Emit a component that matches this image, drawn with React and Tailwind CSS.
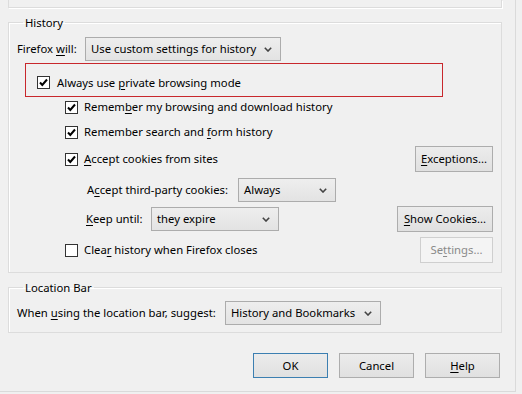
const font = { fontFamily: '"Noto Sans", "Open Sans", sans-serif' }

function U({ children }) {
  return <span className="underline underline-offset-2">{children}</span>
}

function Check({ checked }) {
  return (
    <span className="w-[13px] h-[13px] border border-[#333] bg-white flex items-center justify-center shrink-0">
      {checked && (
        <svg width="11" height="11" viewBox="0 0 11 11">
          <path d="M2 5.5 L4.3 8 L9 2.5" fill="none" stroke="#000" strokeWidth="2" />
        </svg>
      )}
    </span>
  )
}

function Select({ width, children }) {
  return (
    <div className={`${width} h-[24px] border border-[#acacac] bg-gradient-to-b from-[#eeeeee] to-[#e3e3e3] flex items-center justify-between pl-[5px] pr-[8px]`}>
      <span>{children}</span>
      <svg width="8" height="5" viewBox="0 0 8 5">
        <path d="M0.8 0.8 L4 4 L7.2 0.8" fill="none" stroke="#444" strokeWidth="1.6" />
      </svg>
    </div>
  )
}

function Btn({ children, width = 'w-[75px]', h = 'h-[26px]', disabled, def }) {
  const border = def ? 'border-[#3c7fb1]' : disabled ? 'border-[#cfcfcf]' : 'border-[#adadad]'
  const bg = disabled ? 'bg-[#f4f4f4] text-[#8a8a8a]' : 'bg-gradient-to-b from-[#ececec] to-[#e0e0e0] text-black'
  return <div className={`${width} ${h} border ${border} ${bg} flex items-center justify-center shrink-0`}>{children}</div>
}

function Row({ className, children }) {
  return <div className={`flex items-center ${className}`}>{children}</div>
}

export default function App() {
  return (
    <div className="w-[522px] h-[394px] bg-[#f0f0f0] overflow-hidden text-[11.3px] text-black leading-none" style={font}>
      <div className="w-[516px] h-[392px] border-r border-b border-[#dadada] flex flex-col">
        <div className="ml-[8px] w-[494px] h-[8px] border-x border-b border-[#dcdcdc] shadow-[1px_1px_0_#ffffff]" />

        <fieldset className="ml-[8px] mt-[6px] w-[494px] border border-[#dcdcdc] px-[8px] pb-[9px] shadow-[inset_1px_1px_0_#ffffff]">
          <legend className="ml-[6px] px-[2px] h-[16px] leading-[18px]">History</legend>

          <Row className="mt-[7px] h-[24px]">
            <span className="w-[68px]">Firefox <U>w</U>ill:</span>
            <Select width="w-[196px]">Use custom settings for history</Select>
          </Row>

          <div className="mt-[2px] ml-[8px] w-[418px] h-[34px] border border-[#c8272c] flex items-center pl-[11px] pt-[5px]">
            <Check checked />
            <span className="ml-[7px]">Always use <U>p</U>rivate browsing mode</span>
          </div>

          <Row className="mt-[2px] h-[16px] pl-[48px]">
            <Check checked />
            <span className="ml-[6px]">Remem<U>b</U>er my browsing and download history</span>
          </Row>

          <Row className="mt-[9px] h-[16px] pl-[48px]">
            <Check checked />
            <span className="ml-[6px]">Remember search and <U>f</U>orm history</span>
          </Row>

          <Row className="mt-[6px] h-[26px] pl-[48px] justify-between">
            <div className="flex items-center">
              <Check checked />
              <span className="ml-[6px]"><U>A</U>ccept cookies from sites</span>
            </div>
            <Btn width="w-[78px]"><U>E</U>xceptions...</Btn>
          </Row>

          <Row className="mt-[6px] h-[24px] pl-[70px]">
            <span className="w-[151px]">A<U>c</U>cept third-party cookies:</span>
            <Select width="w-[98px]">Always</Select>
          </Row>

          <Row className="mt-[4px] h-[26px] pl-[69px] justify-between">
            <div className="flex items-center">
              <span className="w-[65px]"><U>K</U>eep until:</span>
              <Select width="w-[128px]">they expire</Select>
            </div>
            <Btn width="w-[96px]"><U>S</U>how Cookies...</Btn>
          </Row>

          <Row className="mt-[5px] h-[26px] pl-[48px] justify-between">
            <div className="flex items-center">
              <Check />
              <span className="ml-[6px]">Clea<U>r</U> history when Firefox closes</span>
            </div>
            <Btn width="w-[73px]" disabled>Se<U>t</U>tings...</Btn>
          </Row>
        </fieldset>

        <fieldset className="ml-[8px] mt-[6px] w-[494px] border border-[#dcdcdc] px-[8px] pb-[7px] shadow-[inset_1px_1px_0_#ffffff]">
          <legend className="ml-[6px] px-[2px] h-[16px] leading-[18px]">Location Bar</legend>
          <Row className="mt-[6px] h-[24px]">
            <span className="w-[208px]">When <U>u</U>sing the location bar, suggest:</span>
            <Select width="w-[156px]">History and Bookmarks</Select>
          </Row>
        </fieldset>

        <div className="mt-[20px] flex justify-end gap-[11px] pr-[15px]">
          <Btn h="h-[25px]" def>OK</Btn>
          <Btn h="h-[25px]">Cancel</Btn>
          <Btn h="h-[25px]"><U>H</U>elp</Btn>
        </div>
      </div>
    </div>
  )
}
